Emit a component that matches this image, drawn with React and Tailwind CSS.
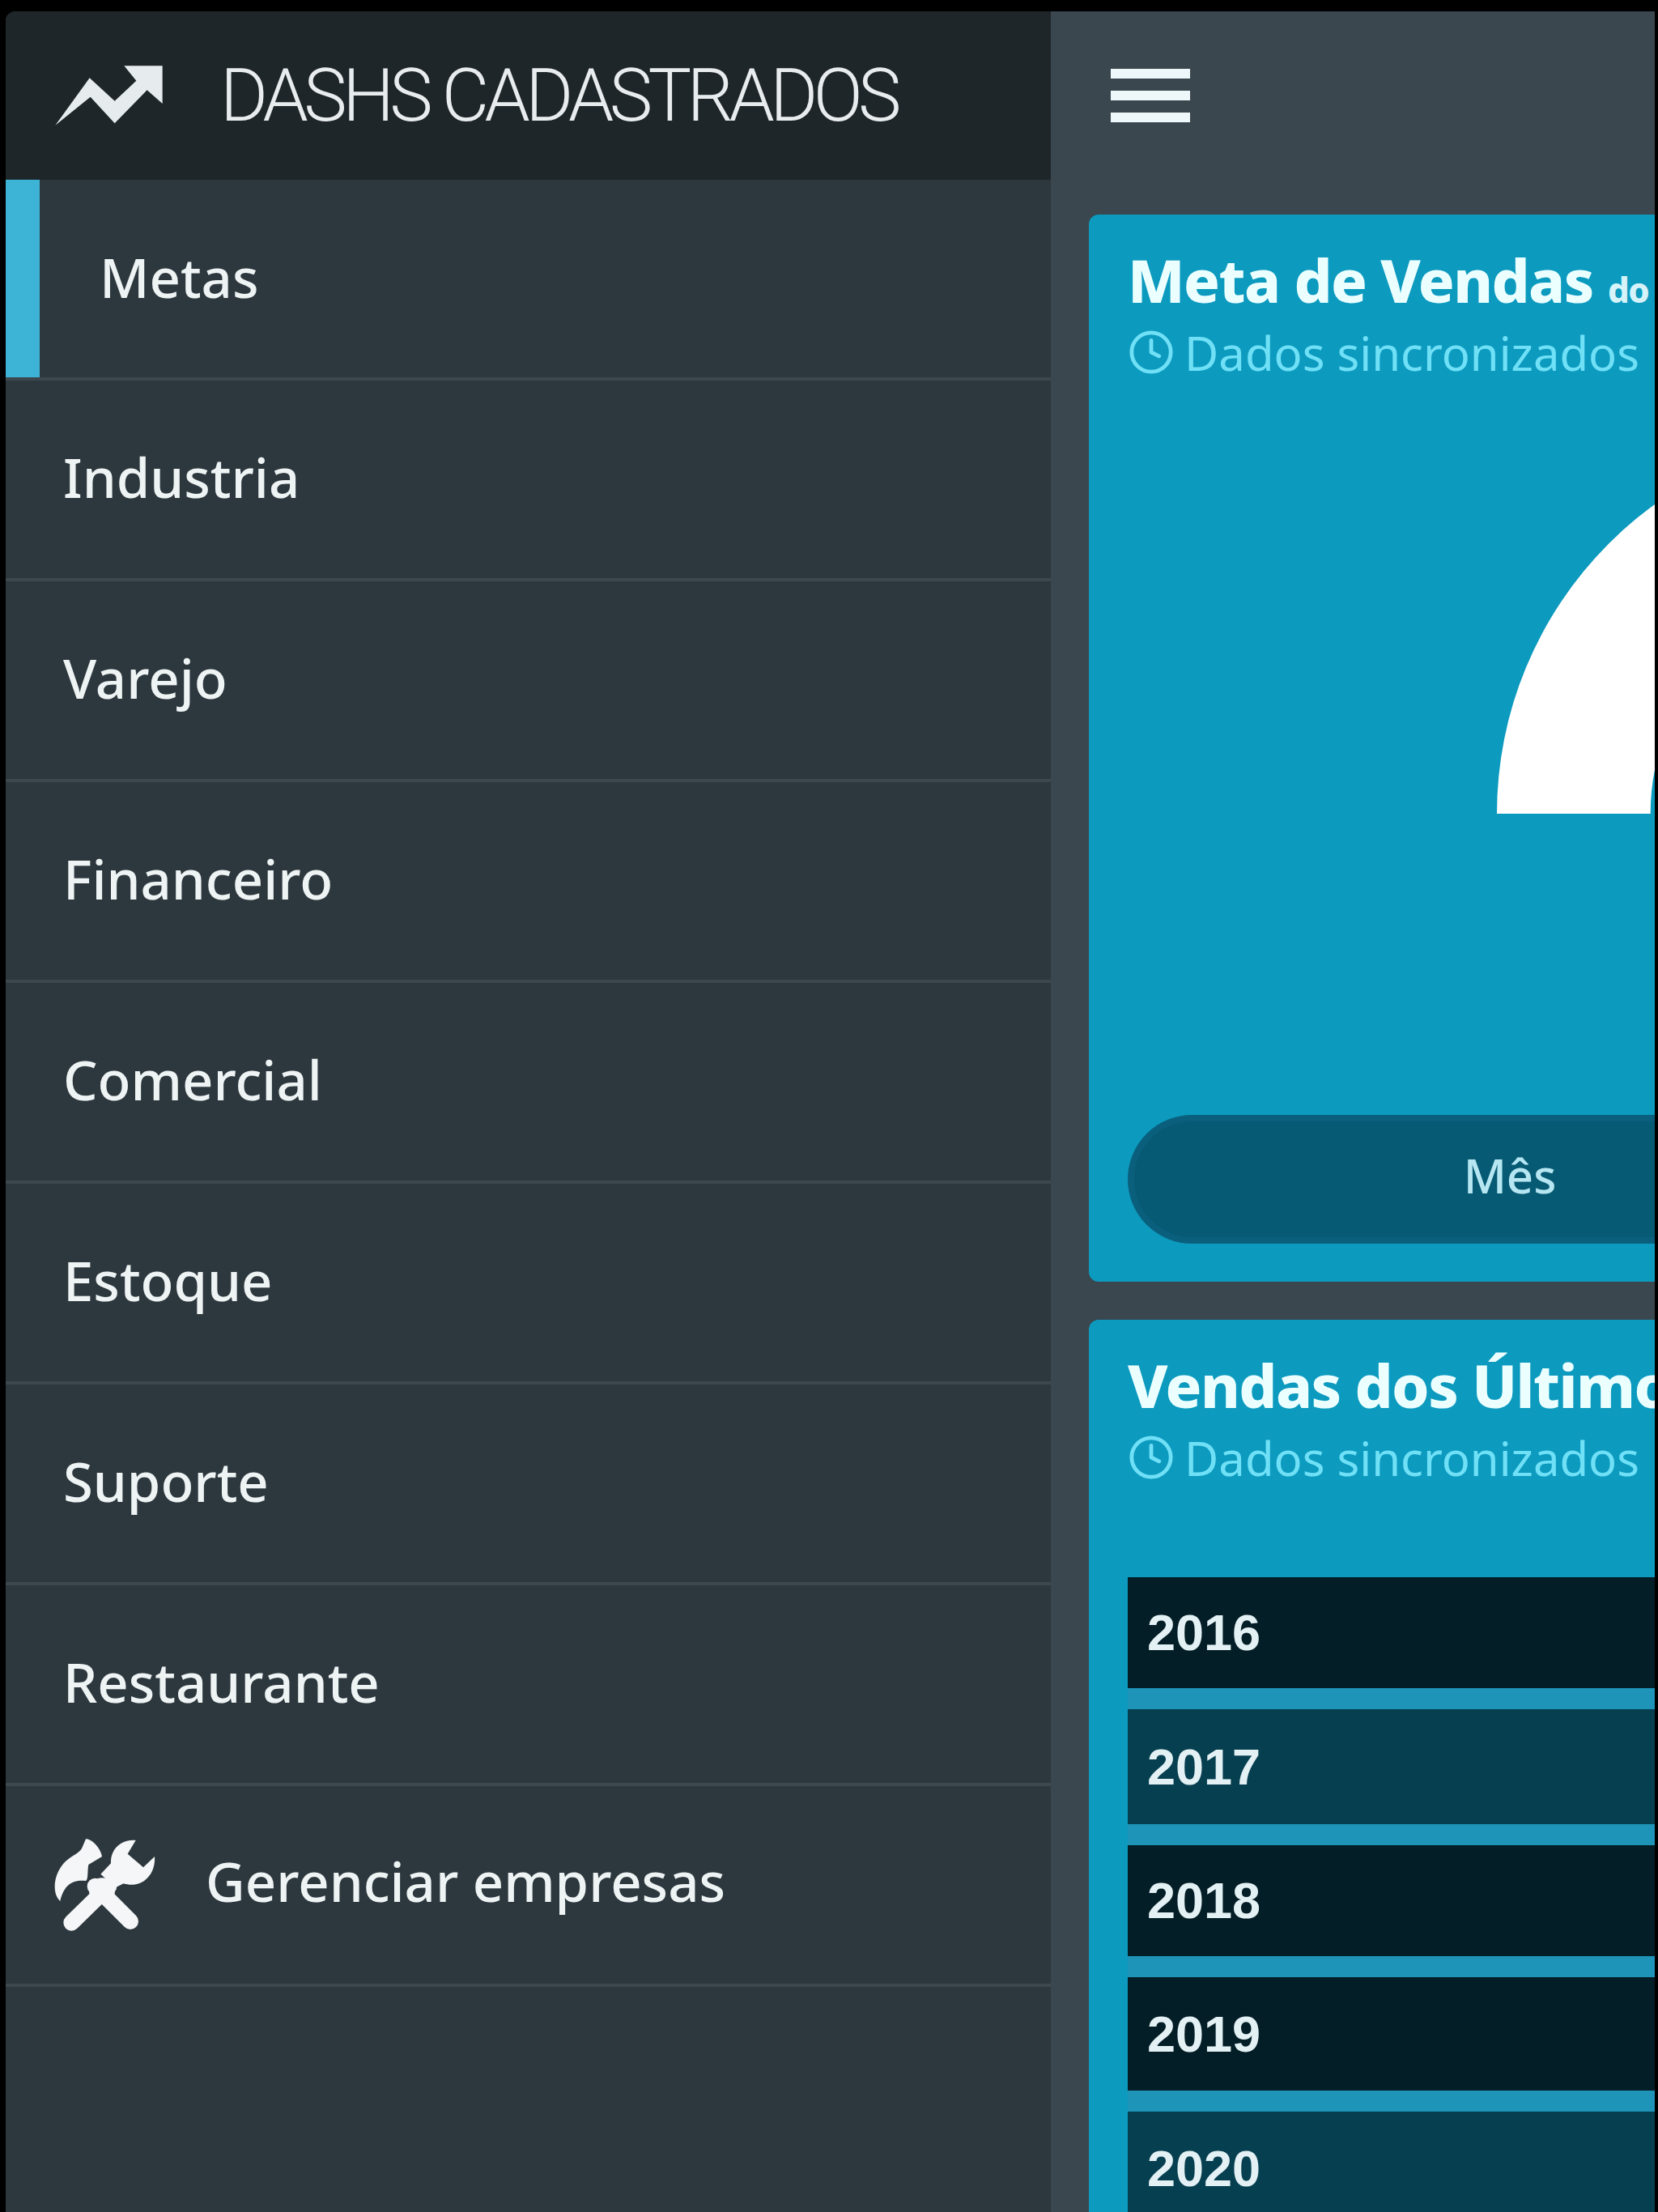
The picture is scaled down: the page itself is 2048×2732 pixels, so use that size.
import { Clock } from "lucide-react";

const menuItems = ["Industria", "Varejo", "Financeiro", "Comercial", "Estoque", "Suporte", "Restaurante"];

const years = [
  { label: "2016", bg: "bg-[#031e26]", height: "h-[137px]" },
  { label: "2017", bg: "bg-[#063f50]", height: "h-[142px]" },
  { label: "2018", bg: "bg-[#031e26]", height: "h-[137px]" },
  { label: "2019", bg: "bg-[#031e26]", height: "h-[140px]" },
  { label: "2020", bg: "bg-[#063f50]", height: "h-[140px]" },
];

function TrendIcon() {
  return (
    <svg viewBox="0 0 540 330" className="w-[180px] h-[110px] shrink-0">
      <path
        d="M55 275 L182 100 L275 185 L355 110 L310 55 L452 55 L452 195 L395 145 L275 268 L185 170 Z"
        fill="#e6ecee"
      />
    </svg>
  );
}

function ToolsIcon() {
  return (
    <svg viewBox="0 0 480 420" className="w-[160px] h-[140px] shrink-0">
      <g fill="#f4f6f7">
        <path d="M165 40 C190 40 220 75 225 105 L175 135 C170 160 175 190 165 195 C120 190 85 205 70 270 C45 250 40 190 75 140 C100 105 140 95 150 75 Z" />
        <path d="M350 45 C300 40 255 75 258 130 L220 170 L275 220 L305 205 C370 225 425 175 420 105 L378 145 L320 95 Z" />
        <circle cx="225" cy="232" r="48" />
      </g>
      <g stroke="#f4f6f7" strokeWidth="60" strokeLinecap="round">
        <line x1="112" y1="350" x2="250" y2="215" />
        <line x1="330" y1="345" x2="200" y2="215" />
      </g>
    </svg>
  );
}

function MenuRow({ children, className = "" }) {
  return (
    <div className={`flex items-center h-[248px] border-b-4 border-[#3c484e] box-border ${className}`}>
      {children}
    </div>
  );
}

function CardHeader({ title, small }) {
  return (
    <div>
      <div className="h-[98px] leading-[98px] text-[74px] font-extrabold text-[#ecffff] whitespace-nowrap tracking-[-1.5px]">
        {title}
        {small && <span className="text-[42px] ml-[18px] text-[#d5f3f8]">{small}</span>}
      </div>
      <div className="flex items-center gap-[12px] mt-[5px] h-[70px] text-[#6fe0f6] text-[58px] whitespace-nowrap">
        <Clock size={58} strokeWidth={2} className="shrink-0" />
        <span>Dados sincronizados</span>
      </div>
    </div>
  );
}

export default function App() {
  return (
    <div className="w-[2048px] h-[2732px] overflow-hidden bg-black pt-[14px] pl-[7px] pr-[4px] font-['Noto_Sans',sans-serif]">
      <div className="flex h-full overflow-hidden rounded-tl-[12px]">
        <aside className="w-[1291px] shrink-0 bg-[#2d383e] text-[#eef3f4] text-[67px] font-medium">
          <div className="flex items-center h-[208px] bg-[#1f2629] pl-[43px] gap-[42px]">
            <TrendIcon />
            <span className="font-['Roboto',sans-serif] font-light text-[90px] tracking-[-5.5px] text-[#e8ecee] whitespace-nowrap">
              DASHS CADASTRADOS
            </span>
          </div>
          <MenuRow>
            <div className="w-[42px] h-full bg-[#3db4d6]" />
            <span className="pl-[74px] mb-[4px]">Metas</span>
          </MenuRow>
          {menuItems.map((item) => (
            <MenuRow key={item} className="pl-[71px]">
              <span className="mb-[6px]">{item}</span>
            </MenuRow>
          ))}
          <MenuRow className="pl-[44px] gap-[43px]">
            <ToolsIcon />
            <span className="mb-[10px]">Gerenciar empresas</span>
          </MenuRow>
        </aside>

        <main className="flex-1 min-w-0 overflow-hidden bg-[#3b474e]">
          <div className="h-[251px] pl-[74px] pt-[71px] flex flex-col gap-[15px]">
            <div className="w-[98px] h-[12px] bg-[#eef8fa]" />
            <div className="w-[98px] h-[12px] bg-[#eef8fa]" />
            <div className="w-[98px] h-[12px] bg-[#eef8fa]" />
          </div>

          <section className="w-[1500px] ml-[47px] h-[1318px] bg-[#0c9abf] rounded-[12px] px-[48px] pt-[32px]">
            <CardHeader title="Meta de Vendas" small="do" />
            <svg viewBox="0 0 1000 530" className="block w-[1000px] h-[530px] ml-[456px] mt-[5px]">
              <path d="M0 530 A471.7 471.7 0 0 1 943.4 530 L753.7 530 A282 282 0 0 0 189.7 530 Z" fill="#ffffff" />
            </svg>
            <div className="mt-[372px] w-[1400px] h-[159px] rounded-[80px] bg-[#075a73] border-[8px] border-[#0a5f7d] box-border">
              <div className="w-[928px] h-full pb-[10px] flex items-center justify-center text-[58px] font-medium text-[#b5e6f2]">
                Mês
              </div>
            </div>
          </section>

          <section className="w-[1500px] ml-[47px] mt-[47px] h-[1200px] bg-[#0c9abf] rounded-[12px] px-[48px] pt-[32px]">
            <CardHeader title="Vendas dos Últimos" />
            <div className="mt-[113px] flex flex-col gap-[26px] bg-[#1e94b8]">
              {years.map((year) => (
                <div
                  key={year.label}
                  className={`flex items-center pl-[24px] ${year.height} ${year.bg} font-['Liberation_Sans',sans-serif] font-bold text-[63px] text-[#e3f0f4]`}
                >
                  {year.label}
                </div>
              ))}
            </div>
          </section>
        </main>
      </div>
    </div>
  );
}
